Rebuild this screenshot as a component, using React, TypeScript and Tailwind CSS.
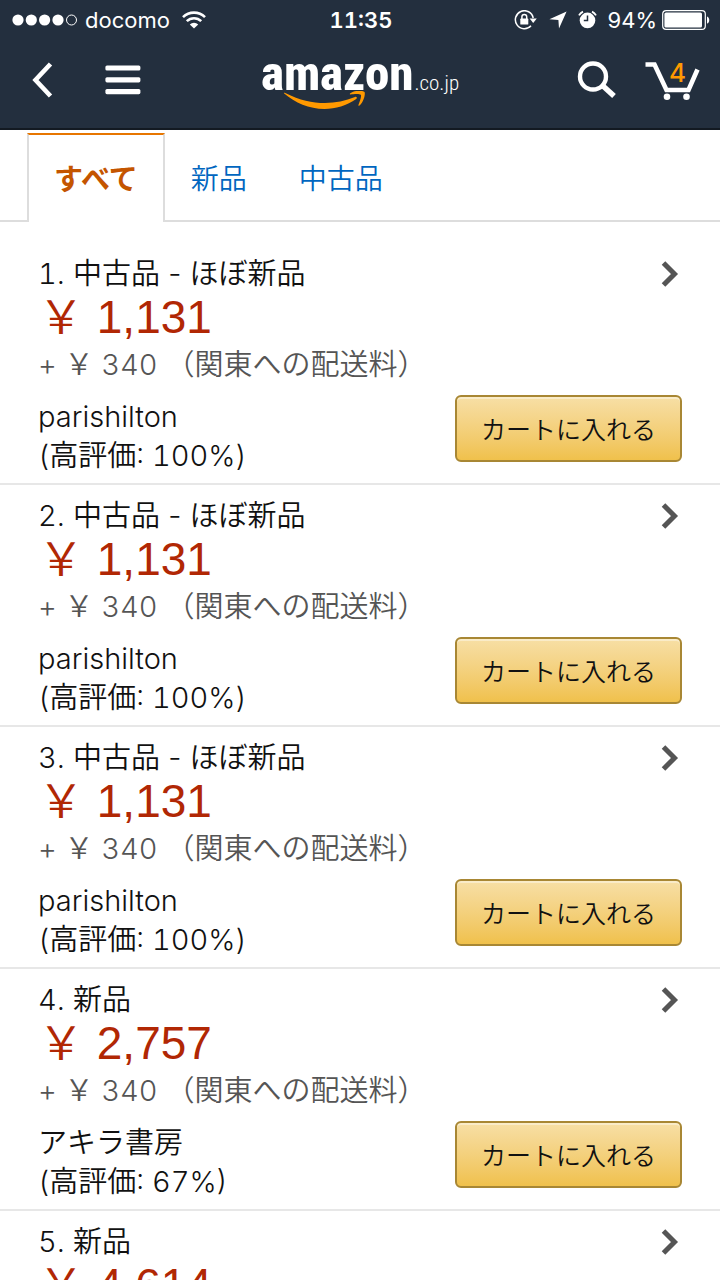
import type { ReactNode } from "react";

type Offer = {
  condition: string;
  price: string;
  seller: string;
  rating: string;
};

const offers: Offer[] = [
  { condition: "中古品 - ほぼ新品", price: "1,131", seller: "parishilton", rating: "100%" },
  { condition: "中古品 - ほぼ新品", price: "1,131", seller: "parishilton", rating: "100%" },
  { condition: "中古品 - ほぼ新品", price: "1,131", seller: "parishilton", rating: "100%" },
  { condition: "新品", price: "2,757", seller: "アキラ書房", rating: "67%" },
  { condition: "新品", price: "4,614", seller: "アキラ書房", rating: "67%" },
];

function StatusBar() {
  return (
    <div className="grid h-10 grid-cols-[1fr_auto_1fr] items-center pl-3 pr-[10px] text-[22px]">
      <div className="flex items-center">
        <svg width="66" height="12" viewBox="0 0 66 12" fill="#fff" aria-hidden="true">
          <circle cx="6" cy="6" r="5.6" />
          <circle cx="19.3" cy="6" r="5.6" />
          <circle cx="32.6" cy="6" r="5.6" />
          <circle cx="46" cy="6" r="5.6" />
          <circle cx="59.5" cy="6" r="5" fill="none" stroke="#fff" />
        </svg>
        <span className="ml-[7px]">docomo</span>
        <svg className="ml-3" width="24" height="18" viewBox="0 0 24 18" fill="none" stroke="#fff" strokeWidth="2.6" aria-hidden="true">
          <path d="M1 6.2a15.6 15.6 0 0 1 22 0" />
          <path d="M4.8 10.2a10.2 10.2 0 0 1 14.4 0" />
          <path d="M12 17.6 7.8 13.4a6 6 0 0 1 8.4 0z" fill="#fff" stroke="none" />
        </svg>
      </div>
      <time className="font-semibold tabular-nums">11:35</time>
      <div className="flex items-center justify-end">
        <svg width="24" height="20" viewBox="0 0 24 20" fill="none" stroke="#fff" strokeWidth="1.5" aria-hidden="true">
          <path d="M19.2 8A9 9 0 1 0 17 15.8" />
          <path d="M15.6 8.4h7.2l-3.6 4.6z" fill="#fff" stroke="none" />
          <rect x="6.3" y="8.6" width="8" height="6" rx=".6" fill="#fff" stroke="none" />
          <path d="M7.9 9V6.8a2.4 2.4 0 0 1 4.8 0V9" />
        </svg>
        <svg className="ml-[11px]" width="18" height="18" viewBox="0 0 18 18" fill="#fff" aria-hidden="true">
          <path d="M17.6.6 10 17.4 9.4 9 .4 8.2z" />
        </svg>
        <svg className="ml-[11px]" width="19" height="20" viewBox="0 0 19 20" fill="#fff" aria-hidden="true">
          <circle cx="9.5" cy="10.4" r="7.8" />
          <path d="M9.5 5.6v5H5.8" fill="none" stroke="#232f3e" strokeWidth="1.5" />
          <path d="M1 5.4A9.4 9.4 0 0 1 5 1.6M18 5.4a9.4 9.4 0 0 0-4-3.8" fill="none" stroke="#fff" strokeWidth="1.8" />
        </svg>
        <span className="ml-[11px]">94%</span>
        <svg className="ml-[5px]" width="48" height="20" viewBox="0 0 48 20" aria-hidden="true">
          <rect x=".7" y=".7" width="42.6" height="18.6" rx="3.4" fill="none" stroke="#fff" strokeWidth="1.2" />
          <rect x="2.4" y="2.4" width="37.6" height="15.2" rx="1.6" fill="#fff" />
          <path d="M45 6.4c3 1 3 6.2 0 7.2z" fill="#fff" />
        </svg>
      </div>
    </div>
  );
}

function Logo() {
  return (
    <a
      href="#home"
      aria-label="amazon.co.jp"
      className="relative flex items-baseline pb-1 font-['Roboto_Condensed',Roboto,sans-serif] leading-[40px]"
    >
      <span className="text-[49px] font-extrabold">amazon</span>
      <span className="ml-px text-[21px] font-light">.co.jp</span>
      <svg className="absolute left-[22px] top-[37px]" width="86" height="20" viewBox="0 0 86 20" fill="#ff9900" aria-hidden="true">
        <path d="M1.2 2.6C.6 2 1.4 1.5 2.3 2 17 9.6 29 12 42 12c10.5 0 20.5-2.3 30-6 1.5-.6 2.7 1 1.2 2C64 14.6 52.500 18 41.500 18 26 18 12 12 1.200 2.600z" />
        <path d="M77.800 3.800c-1.200-1.500-7.400-.8-10.300-.4-.9.100-1-.6-.2-1.200 5-3.500 13.300-2.500 14.200-1.300 1 1.200-.2 9.500-5 13.600-.7.600-1.500.3-1.100-.6 1-2.700 3.500-8.600 2.400-10.100z" />
      </svg>
    </a>
  );
}

function NavBar() {
  return (
    <nav className="grid h-[88px] grid-cols-[1fr_auto_1fr] items-center px-5 pb-2">
      <div className="flex items-center gap-[52px] pl-3">
        <button type="button" aria-label="戻る">
          <svg width="21" height="36" viewBox="0 0 21 36" fill="none" stroke="#fff" strokeWidth="4.6">
            <path d="M18.5 2 3.5 18l15 16" />
          </svg>
        </button>
        <button type="button" aria-label="メニュー">
          <svg width="36" height="30" viewBox="0 0 36 30" fill="#fff">
            <rect x=".4" y=".4" width="35" height="5.2" rx="1.6" />
            <rect x=".4" y="12.2" width="35" height="5.2" rx="1.6" />
            <rect x=".4" y="24" width="35" height="5.2" rx="1.6" />
          </svg>
        </button>
      </div>
      <Logo />
      <div className="flex items-center justify-end gap-7">
        <button type="button" aria-label="検索">
          <svg width="40" height="38" viewBox="0 0 40 38" fill="none" stroke="#fff" strokeWidth="4.4">
            <circle cx="16" cy="15.5" r="13" />
            <path d="M25.5 24.5 37 35" strokeWidth="5.4" />
          </svg>
        </button>
        <a href="#cart" aria-label="カート 4" className="relative">
          <svg width="55" height="40" viewBox="0 0 55 40" fill="none" stroke="#fff" strokeWidth="4.6" aria-hidden="true">
            <path d="M.5 4.5h9L21.5 30h22L52.5 9.5" />
            <circle cx="22" cy="36.7" r="3.3" fill="#fff" stroke="none" />
            <circle cx="41.5" cy="36.7" r="3.3" fill="#fff" stroke="none" />
          </svg>
          <span className="absolute left-6 top-[2px] text-[26px] font-medium leading-[22px] text-[#ff9900]">4</span>
        </a>
      </div>
    </nav>
  );
}

function Tab({ children }: { children: ReactNode }) {
  return (
    <a href="#tab" className="flex items-center px-[26px] pt-1 text-[#0066c0]">
      {children}
    </a>
  );
}

function Tabs() {
  return (
    <div className="flex h-[92px] pt-[3px] text-[28px]">
      <div className="w-[27px] border-b-2 border-[#ddd]" />
      <a
        href="#all"
        className="flex items-center border-x-2 border-t-2 border-x-[#ddd] border-t-[#e77600] px-[25px] pt-[2px] text-[29px] font-bold text-[#c45500]"
      >
        すべて
      </a>
      <div className="flex flex-1 border-b-2 border-[#ddd]">
        <Tab>新品</Tab>
        <Tab>中古品</Tab>
      </div>
    </div>
  );
}

function OfferRow({ offer, index }: { offer: Offer; index: number }) {
  return (
    <li className="border-b-2 border-[#e7e7e7] px-[38px] pb-2 pt-3">
      <div className="flex items-center justify-between">
        <h2 className="text-[29px] leading-[38px]">
          <span className="tabular-nums">{index}</span>. {offer.condition}
        </h2>
        <svg className="mr-[3px]" width="18" height="28" viewBox="0 0 18 28" fill="none" stroke="#555" strokeWidth="5" aria-hidden="true">
          <path d="M2.5 3 13.5 14l-11 11" />
        </svg>
      </div>
      <p className="font-['Liberation_Sans','Noto_Sans_CJK_JP',sans-serif] text-[46px] leading-[48px] text-[#b12704]">
        ￥ {offer.price}
      </p>
      <p className="text-[29px] leading-[47px] tabular-nums text-[#555]">+ ￥ 340 （関東への配送料）</p>
      <div className="flex items-start justify-between pt-[7px]">
        <p className="pt-[2px] text-[29px] leading-[39px] tabular-nums">
          {offer.seller}
          <br />
          (高評価: {offer.rating})
        </p>
        <button
          type="button"
          className="h-[67px] w-[227px] rounded-[6px] border-2 border-[#a88734] bg-linear-to-b from-[#f7dfa5] to-[#f0c14b] pt-1 text-[25px] shadow-[inset_0_2px_0_rgba(255,255,255,0.4)]"
        >
          カートに入れる
        </button>
      </div>
    </li>
  );
}

export default function App() {
  return (
    <div className="h-screen overflow-hidden bg-white font-['Inter','Noto_Sans_CJK_JP',sans-serif] font-[350] text-[#111]">
      <header className="border-b-2 border-[#131a22] bg-[#232f3e] font-normal text-white">
        <StatusBar />
        <NavBar />
      </header>
      <Tabs />
      <ul className="pt-[21px]">
        {offers.map((offer, i) => (
          <OfferRow key={i} offer={offer} index={i + 1} />
        ))}
      </ul>
    </div>
  );
}
